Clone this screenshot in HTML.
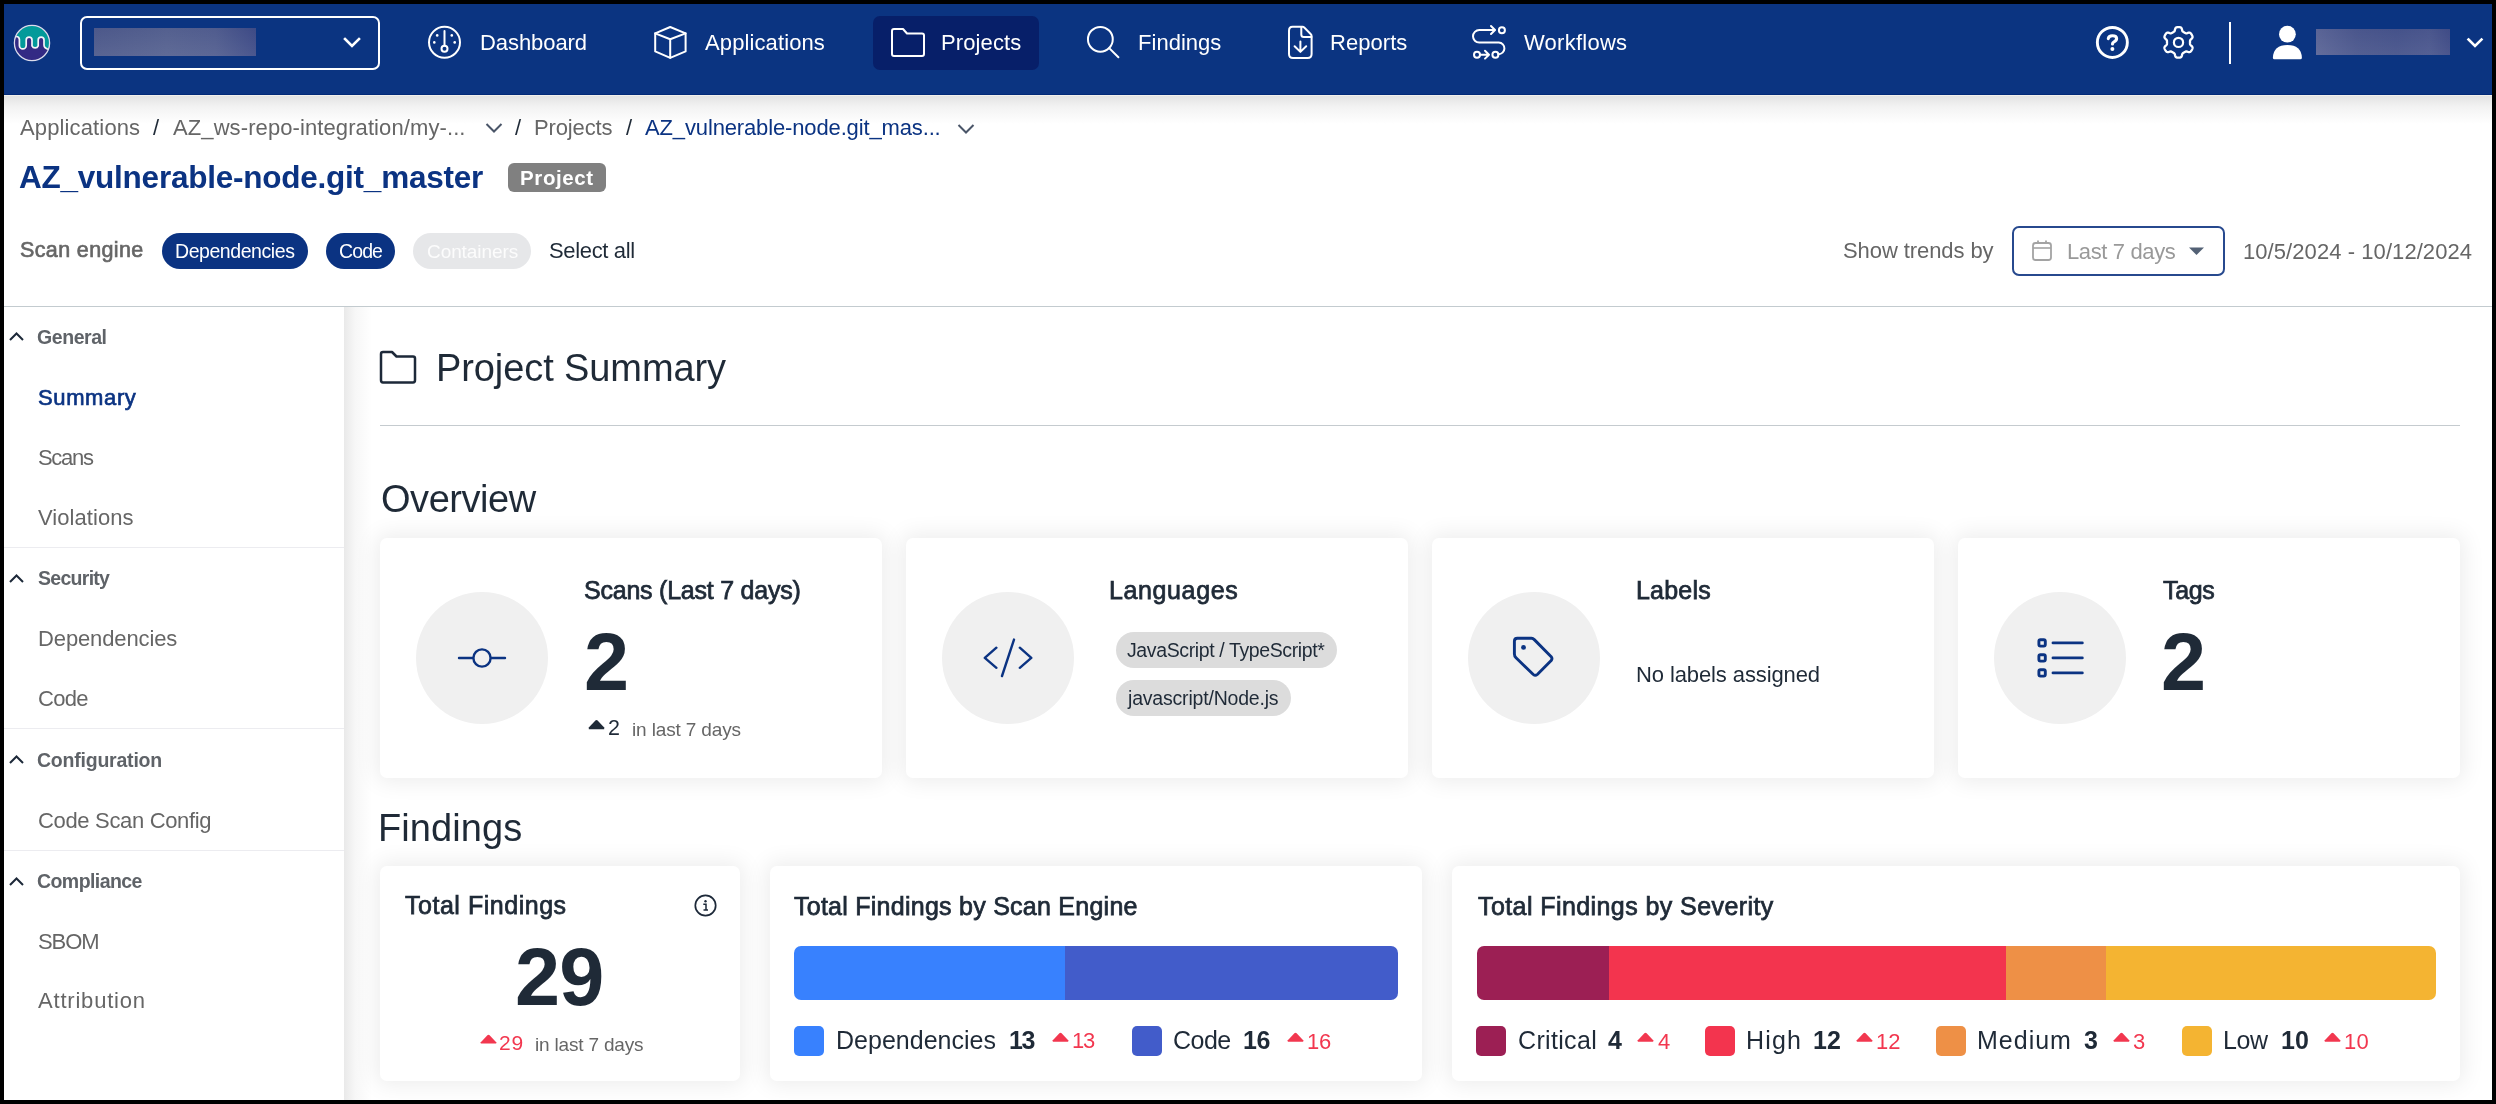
<!DOCTYPE html>
<html><head><meta charset='utf-8'><style>
html,body{margin:0;padding:0;width:2496px;height:1104px;overflow:hidden;background:#000}
body{position:relative;font-family:"Liberation Sans",sans-serif}
.t{position:absolute;white-space:pre;will-change:transform}
svg{overflow:visible}
</style></head><body>
<div style='position:absolute;left:0px;top:0px;width:2496px;height:1104px;background:#000'></div>
<div style='position:absolute;left:4px;top:4px;width:2488px;height:1096px;background:#fff'></div>
<div style='position:absolute;left:4px;top:4px;width:2488px;height:91px;background:#0b3481'></div>
<div style='position:absolute;left:4px;top:94px;width:2488px;height:1px;background:#022a78'></div>
<div style='position:absolute;left:4px;top:95px;width:2488px;height:1px;background:#f2f0ec'></div>
<div style='position:absolute;left:4px;top:96px;width:2488px;height:28px;background:linear-gradient(#e3e3e3,#f3f3f3 40%,#ffffff)'></div>
<svg style='position:absolute;left:13px;top:24px;' width='38' height='38' viewBox='0 0 38 38'>
<defs><clipPath id='lc'><circle cx='19' cy='19' r='17.3'/></clipPath></defs>
<circle cx='19' cy='19' r='17.5' fill='#332a84'/>
<g clip-path='url(#lc)'>
<path d='M0 0 H38 V26 L35.5 25.5 Q31 24 31 21 V16 A2.9 2.9 0 0 0 25.2 16 V21.8 A3.4 3.4 0 0 1 19 21.8 V16 A2.9 2.9 0 0 0 13.2 16 V21.4 A3.4 3.4 0 0 1 6.4 21.4 V15.5 Q6.4 12.5 3.1 12.5 H0 Z' fill='#029a9a'/>
<path d='M0 12.5 H3.1 Q6.4 12.5 6.4 15.5 V21.4 A3.4 3.4 0 0 0 13.2 21.4 V16 A2.9 2.9 0 0 1 19 16 V21.8 A3.4 3.4 0 0 0 25.2 21.8 V16 A2.9 2.9 0 0 1 31 16 V21 Q31 24 35.5 25.5 L38 26' fill='none' stroke='#f4f4f8' stroke-width='1.7'/>
</g>
<circle cx='19' cy='19' r='17.6' fill='none' stroke='#dcdcec' stroke-width='1.3'/>
</svg>
<div style='position:absolute;left:80px;top:16px;width:300px;height:54px;border:2px solid #fff;border-radius:7px;box-sizing:border-box'></div>
<div style='position:absolute;left:94px;top:28px;width:162px;height:28px;background:linear-gradient(rgba(255,255,255,0),rgba(255,255,255,0.07)),linear-gradient(90deg,#4c588a,#54608f 45%,#505c8e 75%,#3d4a86)'></div>
<svg style='position:absolute;left:343px;top:36px;' width='18' height='14' viewBox='0 0 18 14'><path d='M2 3 L9 10 L16 3' fill='none' stroke='#fff' stroke-width='2.6' stroke-linecap='square'/></svg>
<div style='position:absolute;left:873px;top:16px;width:166px;height:54px;background:#071f69;border-radius:7px'></div>
<svg style='position:absolute;left:427px;top:25px;' width='36' height='36' viewBox='0 0 36 36'><circle cx='17.5' cy='17.35' r='15.5' fill='none' stroke='#fff' stroke-width='2' stroke-linecap='round' stroke-linejoin='round'/>
<line x1='17.5' y1='6' x2='17.5' y2='20.6' fill='none' stroke='#fff' stroke-width='2' stroke-linecap='round' stroke-linejoin='round'/><circle cx='17.5' cy='23.7' r='3' fill='none' stroke='#fff' stroke-width='2' stroke-linecap='round' stroke-linejoin='round'/>
<circle cx='10.2' cy='10.4' r='1.3' fill='#fff'/><circle cx='24.8' cy='10.4' r='1.3' fill='#fff'/>
<circle cx='7.3' cy='17.4' r='1.3' fill='#fff'/><circle cx='27.7' cy='17.4' r='1.3' fill='#fff'/></svg>
<svg style='position:absolute;left:652px;top:25px;' width='36' height='36' viewBox='0 0 36 36'><path d='M18.2 2 L33.6 8.4 V26.4 L18.2 32.8 L3.2 26.4 V8.4 Z' fill='none' stroke='#fff' stroke-width='2' stroke-linecap='round' stroke-linejoin='round'/>
<path d='M3.2 8.4 L18.2 14.3 L33.6 8.4 M18.2 14.3 V32.8' fill='none' stroke='#fff' stroke-width='2' stroke-linecap='round' stroke-linejoin='round'/></svg>
<svg style='position:absolute;left:890px;top:27px;' width='36' height='31' viewBox='0 0 36 31'><path d='M2 4 Q2 2 4 2 H13 L17 6.5 H32 Q34 6.5 34 8.5 V27 Q34 29 32 29 H4 Q2 29 2 27 Z' fill='none' stroke='#fff' stroke-width='2' stroke-linecap='round' stroke-linejoin='round'/></svg>
<svg style='position:absolute;left:1085px;top:24px;' width='37' height='37' viewBox='0 0 37 37'><circle cx='15.35' cy='15.3' r='12.4' fill='none' stroke='#fff' stroke-width='2' stroke-linecap='round' stroke-linejoin='round'/><line x1='24.2' y1='24.1' x2='33.4' y2='33.3' fill='none' stroke='#fff' stroke-width='2' stroke-linecap='round' stroke-linejoin='round'/></svg>
<svg style='position:absolute;left:1286px;top:25px;' width='29' height='36' viewBox='0 0 29 36'><path d='M6.5 1.8 H16.5 Q17.5 1.8 18.5 2.8 L24.6 9 Q25.6 10 25.6 11 V28.9 Q25.6 32.9 21.6 32.9 H7 Q3 32.9 3 28.9 V5.8 Q3 1.8 6.5 1.8 Z' fill='none' stroke='#fff' stroke-width='2' stroke-linecap='round' stroke-linejoin='round'/>
<path d='M15.3 2 V9.4 Q15.3 11.9 17.8 11.9 H25.4' fill='none' stroke='#fff' stroke-width='2' stroke-linecap='round' stroke-linejoin='round'/><path d='M14.4 16.5 V26.6 M8.6 21.2 L14.4 26.9 L20.2 21.2' fill='none' stroke='#fff' stroke-width='2' stroke-linecap='round' stroke-linejoin='round'/></svg>
<svg style='position:absolute;left:1471px;top:24px;' width='37' height='37' viewBox='0 0 37 37'><path d='M23.5 6 H8.3 A6.3 6.3 0 0 0 8.3 18.6 H27.8 A5.8 5.8 0 0 1 27.4 30.2' fill='none' stroke='#fff' stroke-width='2' stroke-linecap='round' stroke-linejoin='round'/>
<path d='M20 2 L24 6 L20 10' fill='none' stroke='#fff' stroke-width='2' stroke-linecap='round' stroke-linejoin='round'/><circle cx='30.9' cy='6.2' r='3' fill='none' stroke='#fff' stroke-width='2' stroke-linecap='round' stroke-linejoin='round'/>
<circle cx='6' cy='30.7' r='3' fill='none' stroke='#fff' stroke-width='2' stroke-linecap='round' stroke-linejoin='round'/><path d='M9 30.7 H17.5 M14 26.8 L18 30.7 L14 34.6' fill='none' stroke='#fff' stroke-width='2' stroke-linecap='round' stroke-linejoin='round'/><circle cx='24.4' cy='30.7' r='3' fill='none' stroke='#fff' stroke-width='2' stroke-linecap='round' stroke-linejoin='round'/></svg>
<svg style='position:absolute;left:2094px;top:24px;' width='37' height='37' viewBox='0 0 37 37'><circle cx='18.35' cy='18.45' r='15' fill='none' stroke='#fff' stroke-width='2.9'/>
<path d='M14.3 14.6 Q14.8 11.7 18.3 11.7 Q22.6 11.7 22.6 14.6 Q22.6 16.6 20 17.8 Q18.5 18.5 18.5 20' fill='none' stroke='#fff' stroke-width='3.1' stroke-linecap='round' stroke-linejoin='round'/>
<circle cx='18.4' cy='24.9' r='2' fill='#fff'/></svg>
<svg style='position:absolute;left:2161px;top:25px;' width='35' height='35' viewBox='0 0 35 35'><path d='M29.00 17.40 L29.00 17.70 L29.00 18.00 L28.99 18.30 L29.00 18.61 L29.02 18.92 L29.08 19.23 L29.22 19.57 L29.48 19.95 L29.90 20.38 L30.44 20.87 L30.97 21.39 L31.34 21.90 L31.53 22.37 L31.57 22.80 L31.53 23.21 L31.42 23.60 L31.28 23.97 L31.12 24.34 L30.94 24.70 L30.75 25.05 L30.54 25.39 L30.32 25.73 L30.09 26.05 L29.83 26.36 L29.54 26.64 L29.22 26.89 L28.82 27.07 L28.31 27.14 L27.69 27.07 L26.98 26.88 L26.28 26.65 L25.70 26.50 L25.24 26.46 L24.88 26.51 L24.57 26.62 L24.30 26.75 L24.03 26.90 L23.77 27.05 L23.51 27.21 L23.25 27.36 L22.99 27.51 L22.73 27.66 L22.46 27.81 L22.20 27.96 L21.95 28.13 L21.70 28.35 L21.48 28.63 L21.28 29.05 L21.12 29.63 L20.97 30.34 L20.78 31.06 L20.53 31.63 L20.21 32.03 L19.86 32.29 L19.48 32.45 L19.09 32.56 L18.70 32.62 L18.30 32.67 L17.90 32.69 L17.50 32.70 L17.10 32.69 L16.70 32.67 L16.30 32.62 L15.91 32.56 L15.52 32.45 L15.14 32.29 L14.79 32.03 L14.47 31.63 L14.22 31.06 L14.03 30.34 L13.88 29.63 L13.72 29.05 L13.52 28.63 L13.30 28.35 L13.05 28.13 L12.80 27.96 L12.54 27.81 L12.27 27.66 L12.01 27.51 L11.75 27.36 L11.49 27.21 L11.23 27.05 L10.97 26.90 L10.70 26.75 L10.43 26.62 L10.12 26.51 L9.76 26.46 L9.30 26.50 L8.72 26.65 L8.02 26.88 L7.31 27.07 L6.69 27.14 L6.18 27.07 L5.78 26.89 L5.46 26.64 L5.17 26.36 L4.91 26.05 L4.68 25.73 L4.46 25.39 L4.25 25.05 L4.06 24.70 L3.88 24.34 L3.72 23.97 L3.58 23.60 L3.47 23.21 L3.43 22.80 L3.47 22.37 L3.66 21.90 L4.03 21.39 L4.56 20.87 L5.10 20.38 L5.52 19.95 L5.78 19.57 L5.92 19.23 L5.98 18.92 L6.00 18.61 L6.01 18.30 L6.00 18.00 L6.00 17.70 L6.00 17.40 L6.00 17.10 L6.00 16.80 L6.01 16.50 L6.00 16.19 L5.98 15.88 L5.92 15.57 L5.78 15.23 L5.52 14.85 L5.10 14.42 L4.56 13.93 L4.03 13.41 L3.66 12.90 L3.47 12.43 L3.43 12.00 L3.47 11.59 L3.58 11.20 L3.72 10.83 L3.88 10.46 L4.06 10.10 L4.25 9.75 L4.46 9.41 L4.68 9.07 L4.91 8.75 L5.17 8.44 L5.46 8.16 L5.78 7.91 L6.18 7.73 L6.69 7.66 L7.31 7.73 L8.02 7.92 L8.72 8.15 L9.30 8.30 L9.76 8.34 L10.12 8.29 L10.43 8.18 L10.70 8.05 L10.97 7.90 L11.23 7.75 L11.49 7.59 L11.75 7.44 L12.01 7.29 L12.27 7.14 L12.54 6.99 L12.80 6.84 L13.05 6.67 L13.30 6.45 L13.52 6.17 L13.72 5.75 L13.88 5.17 L14.03 4.46 L14.22 3.74 L14.47 3.17 L14.79 2.77 L15.14 2.51 L15.52 2.35 L15.91 2.24 L16.30 2.18 L16.70 2.13 L17.10 2.11 L17.50 2.10 L17.90 2.11 L18.30 2.13 L18.70 2.18 L19.09 2.24 L19.48 2.35 L19.86 2.51 L20.21 2.77 L20.53 3.17 L20.78 3.74 L20.97 4.46 L21.12 5.17 L21.28 5.75 L21.48 6.17 L21.70 6.45 L21.95 6.67 L22.20 6.84 L22.46 6.99 L22.73 7.14 L22.99 7.29 L23.25 7.44 L23.51 7.59 L23.77 7.75 L24.03 7.90 L24.30 8.05 L24.57 8.18 L24.88 8.29 L25.24 8.34 L25.70 8.30 L26.28 8.15 L26.98 7.92 L27.69 7.73 L28.31 7.66 L28.82 7.73 L29.22 7.91 L29.54 8.16 L29.83 8.44 L30.09 8.75 L30.32 9.07 L30.54 9.41 L30.75 9.75 L30.94 10.10 L31.12 10.46 L31.28 10.83 L31.42 11.20 L31.53 11.59 L31.57 12.00 L31.53 12.43 L31.34 12.90 L30.97 13.41 L30.44 13.93 L29.90 14.42 L29.48 14.85 L29.22 15.23 L29.08 15.57 L29.02 15.88 L29.00 16.19 L28.99 16.50 L29.00 16.80 L29.00 17.10 Z' fill='none' stroke='#fff' stroke-width='2.3' stroke-linejoin='round'/><circle cx='17.5' cy='17.4' r='4.6' fill='none' stroke='#fff' stroke-width='2.2'/></svg>
<div style='position:absolute;left:2229px;top:22px;width:2px;height:42px;background:#fff'></div>
<svg style='position:absolute;left:2271px;top:25px;' width='33' height='35' viewBox='0 0 33 35'><circle cx='16.4' cy='9.2' r='8.4' fill='#fff'/><path d='M3.4 34.2 Q1.9 34.2 1.9 32.7 Q2.5 20.1 16.4 20.1 Q30.3 20.1 30.9 32.7 Q30.9 34.2 29.4 34.2 Z' fill='#fff'/></svg>
<div style='position:absolute;left:2316px;top:29px;width:134px;height:26px;background:linear-gradient(rgba(255,255,255,0),rgba(255,255,255,0.06)),linear-gradient(90deg,#5a6496,#4a568c 30%,#45528a 60%,#4a568d 85%,#3f4b86)'></div>
<svg style='position:absolute;left:2466px;top:36px;' width='18' height='14' viewBox='0 0 18 14'><path d='M2.5 3.5 L9 10 L15.5 3.5' fill='none' stroke='#fff' stroke-width='2.6' stroke-linecap='square'/></svg>
<svg style='position:absolute;left:484px;top:121px;' width='20' height='13' viewBox='0 0 20 13'><path d='M2.5 3 L10 10.5 L17.5 3' fill='none' stroke='#4a5568' stroke-width='2'/></svg>
<svg style='position:absolute;left:956px;top:122px;' width='20' height='13' viewBox='0 0 20 13'><path d='M2.5 3 L10 10.5 L17.5 3' fill='none' stroke='#4a5568' stroke-width='2'/></svg>
<div style='position:absolute;left:508px;top:163px;width:98px;height:29px;background:#808080;border-radius:6px'></div>
<div style='position:absolute;left:162px;top:233px;width:146px;height:36px;background:#0b3382;border-radius:18px'></div>
<div style='position:absolute;left:326px;top:233px;width:69px;height:36px;background:#0b3382;border-radius:18px'></div>
<div style='position:absolute;left:413px;top:233px;width:118px;height:36px;background:#e6e7e9;border-radius:18px'></div>
<div style='position:absolute;left:2012px;top:226px;width:213px;height:50px;border:2px solid #27498e;border-radius:7px;box-sizing:border-box'></div>
<svg style='position:absolute;left:2031px;top:239px;' width='22' height='23' viewBox='0 0 22 23'><rect x='2' y='4' width='18' height='17' rx='2.5' fill='none' stroke='#a3a3a3' stroke-width='1.8'/><line x1='2' y1='9' x2='20' y2='9' stroke='#a3a3a3' stroke-width='1.6'/><line x1='7' y1='1.5' x2='7' y2='5' stroke='#a3a3a3' stroke-width='1.8'/><line x1='15' y1='1.5' x2='15' y2='5' stroke='#a3a3a3' stroke-width='1.8'/></svg>
<svg style='position:absolute;left:2188px;top:246px;' width='17' height='10' viewBox='0 0 17 10'><path d='M1 1.5 H16 L8.5 9 Z' fill='#536175'/></svg>
<div style='position:absolute;left:4px;top:306px;width:2488px;height:1px;background:#c3cbcf'></div>
<div style='position:absolute;left:344px;top:307px;width:28px;height:793px;background:linear-gradient(90deg,#e9e9e9,#f7f7f7 40%,#ffffff)'></div>
<svg style='position:absolute;left:8px;top:330px;' width='17' height='12' viewBox='0 0 17 12'><path d='M2 10 L8.5 3.5 L15 10' fill='none' stroke='#1d2939' stroke-width='2'/></svg>
<svg style='position:absolute;left:8px;top:572px;' width='17' height='12' viewBox='0 0 17 12'><path d='M2 10 L8.5 3.5 L15 10' fill='none' stroke='#1d2939' stroke-width='2'/></svg>
<svg style='position:absolute;left:8px;top:753px;' width='17' height='12' viewBox='0 0 17 12'><path d='M2 10 L8.5 3.5 L15 10' fill='none' stroke='#1d2939' stroke-width='2'/></svg>
<svg style='position:absolute;left:8px;top:875px;' width='17' height='12' viewBox='0 0 17 12'><path d='M2 10 L8.5 3.5 L15 10' fill='none' stroke='#1d2939' stroke-width='2'/></svg>
<div style='position:absolute;left:4px;top:547px;width:340px;height:1px;background:#ececf0'></div>
<div style='position:absolute;left:4px;top:728px;width:340px;height:1px;background:#ececf0'></div>
<div style='position:absolute;left:4px;top:850px;width:340px;height:1px;background:#ececf0'></div>
<svg style='position:absolute;left:378px;top:349px;' width='40' height='36' viewBox='0 0 40 36'><path d='M3 5 Q3 3 5 3 H14 L18.5 7.5 H35 Q37 7.5 37 9.5 V31 Q37 33.5 35 33.5 H5 Q3 33.5 3 31 Z' fill='none' stroke='#1d2939' stroke-width='2.5' stroke-linejoin='round'/></svg>
<div style='position:absolute;left:380px;top:425px;width:2080px;height:1px;background:#c5cbcf'></div>
<div style='position:absolute;left:380px;top:538px;width:502px;height:240px;background:#fff;border-radius:7px;box-shadow:0 0 22px 4px rgba(0,0,0,0.075)'></div>
<div style='position:absolute;left:416px;top:592px;width:132px;height:132px;border-radius:50%;background:#f0f0f0'></div>
<div style='position:absolute;left:906px;top:538px;width:502px;height:240px;background:#fff;border-radius:7px;box-shadow:0 0 22px 4px rgba(0,0,0,0.075)'></div>
<div style='position:absolute;left:942px;top:592px;width:132px;height:132px;border-radius:50%;background:#f0f0f0'></div>
<div style='position:absolute;left:1432px;top:538px;width:502px;height:240px;background:#fff;border-radius:7px;box-shadow:0 0 22px 4px rgba(0,0,0,0.075)'></div>
<div style='position:absolute;left:1468px;top:592px;width:132px;height:132px;border-radius:50%;background:#f0f0f0'></div>
<div style='position:absolute;left:1958px;top:538px;width:502px;height:240px;background:#fff;border-radius:7px;box-shadow:0 0 22px 4px rgba(0,0,0,0.075)'></div>
<div style='position:absolute;left:1994px;top:592px;width:132px;height:132px;border-radius:50%;background:#f0f0f0'></div>
<svg style='position:absolute;left:456px;top:646px;' width='52' height='24' viewBox='0 0 52 24'><line x1='3' y1='12' x2='17' y2='12' fill='none' stroke='#0b3382' stroke-width='2.4' stroke-linecap='round' stroke-linejoin='round'/><circle cx='26' cy='12' r='8.6' fill='none' stroke='#0b3382' stroke-width='2.4' stroke-linecap='round' stroke-linejoin='round'/><line x1='35' y1='12' x2='49' y2='12' fill='none' stroke='#0b3382' stroke-width='2.4' stroke-linecap='round' stroke-linejoin='round'/></svg>
<svg style='position:absolute;left:982px;top:637px;' width='52' height='42' viewBox='0 0 52 42'><path d='M14.4 10.7 L2.8 20.9 L14.4 30.8 M37.8 10.7 L49.3 20.9 L37.8 30.8 M32 2.6 L20 39' fill='none' stroke='#0b3382' stroke-width='2.4' stroke-linecap='round' stroke-linejoin='round'/></svg>
<svg style='position:absolute;left:1511px;top:635px;' width='44' height='44' viewBox='0 0 44 44'><path d='M3.4 6.3 Q3.4 3.3 6.4 3.3 H20.5 Q22 3.3 23.3 4.6 L40.2 21.7 Q41.7 23.6 40.2 25.5 L26.3 39.5 Q24.3 41.2 22.3 39.5 L5 22.8 Q3.4 21.2 3.4 19 Z' fill='none' stroke='#0b3382' stroke-width='2.9' stroke-linecap='round' stroke-linejoin='round'/><circle cx='12.5' cy='12.4' r='2.4' fill='#0b3382'/></svg>
<svg style='position:absolute;left:2035px;top:636px;' width='52' height='44' viewBox='0 0 52 44'><rect x='3.9' y='3.7' width='6.4' height='6.4' rx='1.6' fill='none' stroke='#0b3382' stroke-width='2.9' stroke-linecap='round' stroke-linejoin='round'/><rect x='3.9' y='18.7' width='6.4' height='6.4' rx='1.6' fill='none' stroke='#0b3382' stroke-width='2.9' stroke-linecap='round' stroke-linejoin='round'/><rect x='3.9' y='33.7' width='6.4' height='6.4' rx='1.6' fill='none' stroke='#0b3382' stroke-width='2.9' stroke-linecap='round' stroke-linejoin='round'/><line x1='18' y1='6.9' x2='47.3' y2='6.9' fill='none' stroke='#0b3382' stroke-width='2.9' stroke-linecap='round' stroke-linejoin='round'/><line x1='18' y1='21.9' x2='47.3' y2='21.9' fill='none' stroke='#0b3382' stroke-width='2.9' stroke-linecap='round' stroke-linejoin='round'/><line x1='18' y1='36.9' x2='47.3' y2='36.9' fill='none' stroke='#0b3382' stroke-width='2.9' stroke-linecap='round' stroke-linejoin='round'/></svg>
<svg style='position:absolute;left:587.5px;top:718.5px;' width='17' height='11' viewBox='0 0 17 11'><path d='M0.8 10.2 V8.6 L7.4 1.6 Q8.5 0.5 9.6 1.6 L16.2 8.6 V10.2 Z' fill='#1f2a37'/></svg>
<div style='position:absolute;left:1116px;top:632px;width:221px;height:36px;background:#dcdcdc;border-radius:18px'></div>
<div style='position:absolute;left:1116px;top:680px;width:175px;height:36px;background:#dcdcdc;border-radius:18px'></div>
<div style='position:absolute;left:380px;top:866px;width:360px;height:215px;background:#fff;border-radius:7px;box-shadow:0 0 22px 4px rgba(0,0,0,0.075)'></div>
<div style='position:absolute;left:770px;top:866px;width:652px;height:215px;background:#fff;border-radius:7px;box-shadow:0 0 22px 4px rgba(0,0,0,0.075)'></div>
<div style='position:absolute;left:1452px;top:866px;width:1008px;height:215px;background:#fff;border-radius:7px;box-shadow:0 0 22px 4px rgba(0,0,0,0.075)'></div>
<svg style='position:absolute;left:693px;top:893px;' width='25' height='25' viewBox='0 0 25 25'><circle cx='12.5' cy='12.5' r='10.2' fill='none' stroke='#1d2939' stroke-width='1.7'/><circle cx='12.5' cy='8.2' r='1.2' fill='#1d2939'/><path d='M10.3 11.3 H13 V17 M10.5 17 H15' fill='none' stroke='#1d2939' stroke-width='1.5'/></svg>
<svg style='position:absolute;left:479.5px;top:1033.5px;' width='17' height='11' viewBox='0 0 17 11'><path d='M0.8 9.6 V8.2 L7.4 1.2 Q8.5 0.1 9.6 1.2 L16.2 8.2 V9.6 Z' fill='#f2374f'/></svg>
<div style='position:absolute;left:794px;top:946px;width:604px;height:54px;border-radius:7px;overflow:hidden;background:linear-gradient(90deg,#3881fe 0,#3881fe 270.8px,#425cca 270.8px)'></div>
<div style='position:absolute;left:794px;top:1026px;width:30px;height:30px;background:#3881fe;border-radius:5px'></div>
<svg style='position:absolute;left:1051.5px;top:1032px;' width='17' height='11' viewBox='0 0 17 11'><path d='M0.8 9.8 V8.2 L7.4 1.2 Q8.5 0.1 9.6 1.2 L16.2 8.2 V9.8 Z' fill='#f2374f'/></svg>
<div style='position:absolute;left:1132px;top:1026px;width:30px;height:30px;background:#425cca;border-radius:5px'></div>
<svg style='position:absolute;left:1286.7px;top:1032px;' width='17' height='11' viewBox='0 0 17 11'><path d='M0.8 9.8 V8.2 L7.4 1.2 Q8.5 0.1 9.6 1.2 L16.2 8.2 V9.8 Z' fill='#f2374f'/></svg>
<div style='position:absolute;left:1477px;top:946px;width:959.4px;height:54px;border-radius:7px;overflow:hidden;background:linear-gradient(90deg,#9c1f54 0,#9c1f54 132.3px,#f3344e 132.3px,#f3344e 529.3px,#ee9046 529.3px,#ee9046 628.6px,#f4b432 628.6px)'></div>
<div style='position:absolute;left:1476px;top:1026px;width:30px;height:30px;background:#9c1f54;border-radius:5px'></div>
<svg style='position:absolute;left:1637px;top:1032px;' width='17' height='11' viewBox='0 0 17 11'><path d='M0.8 9.8 V8.2 L7.4 1.2 Q8.5 0.1 9.6 1.2 L16.2 8.2 V9.8 Z' fill='#f2374f'/></svg>
<div style='position:absolute;left:1705px;top:1026px;width:30px;height:30px;background:#f3344e;border-radius:5px'></div>
<svg style='position:absolute;left:1856px;top:1032px;' width='17' height='11' viewBox='0 0 17 11'><path d='M0.8 9.8 V8.2 L7.4 1.2 Q8.5 0.1 9.6 1.2 L16.2 8.2 V9.8 Z' fill='#f2374f'/></svg>
<div style='position:absolute;left:1936px;top:1026px;width:30px;height:30px;background:#ee9046;border-radius:5px'></div>
<svg style='position:absolute;left:2113px;top:1032px;' width='17' height='11' viewBox='0 0 17 11'><path d='M0.8 9.8 V8.2 L7.4 1.2 Q8.5 0.1 9.6 1.2 L16.2 8.2 V9.8 Z' fill='#f2374f'/></svg>
<div style='position:absolute;left:2182px;top:1026px;width:30px;height:30px;background:#f4b432;border-radius:5px'></div>
<svg style='position:absolute;left:2324px;top:1032px;' width='17' height='11' viewBox='0 0 17 11'><path d='M0.8 9.8 V8.2 L7.4 1.2 Q8.5 0.1 9.6 1.2 L16.2 8.2 V9.8 Z' fill='#f2374f'/></svg>
<div class='t' style='left:479.70px;top:32.00px;font-size:22px;line-height:22px;font-weight:400;color:#ffffff;letter-spacing:-0.075px'>Dashboard</div>
<div class='t' style='left:705.30px;top:32.00px;font-size:22px;line-height:22px;font-weight:400;color:#ffffff;letter-spacing:0.109px'>Applications</div>
<div class='t' style='left:941.00px;top:32.00px;font-size:22px;line-height:22px;font-weight:400;color:#ffffff;letter-spacing:0.114px'>Projects</div>
<div class='t' style='left:1137.50px;top:32.00px;font-size:22px;line-height:22px;font-weight:400;color:#ffffff;letter-spacing:0.029px'>Findings</div>
<div class='t' style='left:1329.60px;top:32.00px;font-size:22px;line-height:22px;font-weight:400;color:#ffffff;letter-spacing:0.050px'>Reports</div>
<div class='t' style='left:1524.00px;top:32.00px;font-size:22px;line-height:22px;font-weight:400;color:#ffffff;letter-spacing:0.250px'>Workflows</div>
<div class='t' style='left:20.30px;top:117.00px;font-size:22px;line-height:22px;font-weight:400;color:#666666;letter-spacing:0.136px'>Applications</div>
<div class='t' style='left:153.00px;top:117.00px;font-size:22px;line-height:22px;font-weight:400;color:#1f2a37;letter-spacing:0.000px'>/</div>
<div class='t' style='left:172.70px;top:117.00px;font-size:22px;line-height:22px;font-weight:400;color:#666666;letter-spacing:0.096px'>AZ_ws-repo-integration/my-...</div>
<div class='t' style='left:515.30px;top:117.00px;font-size:22px;line-height:22px;font-weight:400;color:#1f2a37;letter-spacing:0.000px'>/</div>
<div class='t' style='left:534.00px;top:117.00px;font-size:22px;line-height:22px;font-weight:400;color:#666666;letter-spacing:-0.143px'>Projects</div>
<div class='t' style='left:626.00px;top:117.00px;font-size:22px;line-height:22px;font-weight:400;color:#1f2a37;letter-spacing:0.000px'>/</div>
<div class='t' style='left:644.60px;top:117.00px;font-size:22px;line-height:22px;font-weight:400;color:#0b3382;letter-spacing:-0.139px'>AZ_vulnerable-node.git_mas...</div>
<div class='t' style='left:19.20px;top:162.00px;font-size:31.5px;line-height:31.5px;font-weight:700;color:#0b3382;letter-spacing:-0.236px'>AZ_vulnerable-node.git_master</div>
<div class='t' style='left:520.00px;top:167.50px;font-size:20.5px;line-height:20.5px;font-weight:700;color:#ffffff;letter-spacing:0.617px'>Project</div>
<div class='t' style='left:20.12px;top:240.48px;font-size:21.5px;line-height:21.5px;font-weight:400;color:#666666;letter-spacing:0.365px;-webkit-text-stroke:0.65px #666666'>Scan engine</div>
<div class='t' style='left:175.00px;top:242.10px;font-size:19.5px;line-height:19.5px;font-weight:400;color:#ffffff;letter-spacing:-0.436px'>Dependencies</div>
<div class='t' style='left:338.60px;top:242.10px;font-size:19.5px;line-height:19.5px;font-weight:400;color:#ffffff;letter-spacing:-0.900px'>Code</div>
<div class='t' style='left:426.50px;top:242.10px;font-size:19px;line-height:19px;font-weight:400;color:#fcfcfc;letter-spacing:-0.078px'>Containers</div>
<div class='t' style='left:549.30px;top:239.80px;font-size:22px;line-height:22px;font-weight:400;color:#1f2a37;letter-spacing:-0.344px'>Select all</div>
<div class='t' style='left:1842.80px;top:239.80px;font-size:22px;line-height:22px;font-weight:400;color:#666666;letter-spacing:-0.085px'>Show trends by</div>
<div class='t' style='left:2066.70px;top:241.00px;font-size:22px;line-height:22px;font-weight:400;color:#999999;letter-spacing:-0.370px'>Last 7 days</div>
<div class='t' style='left:2243.00px;top:240.50px;font-size:22px;line-height:22px;font-weight:400;color:#666666;letter-spacing:0.071px'>10/5/2024 - 10/12/2024</div>
<div class='t' style='left:36.60px;top:328.00px;font-size:19.5px;line-height:19.5px;font-weight:700;color:#5f6368;letter-spacing:-0.433px'>General</div>
<div class='t' style='left:37.60px;top:569.40px;font-size:19.5px;line-height:19.5px;font-weight:700;color:#5f6368;letter-spacing:-0.714px'>Security</div>
<div class='t' style='left:36.60px;top:750.70px;font-size:19.5px;line-height:19.5px;font-weight:700;color:#5f6368;letter-spacing:-0.217px'>Configuration</div>
<div class='t' style='left:36.60px;top:872.30px;font-size:19.5px;line-height:19.5px;font-weight:700;color:#5f6368;letter-spacing:-0.567px'>Compliance</div>
<div class='t' style='left:37.83px;top:386.77px;font-size:22px;line-height:22px;font-weight:400;color:#0b3382;letter-spacing:0.623px;-webkit-text-stroke:0.66px #0b3382'>Summary</div>
<div class='t' style='left:37.60px;top:446.90px;font-size:22px;line-height:22px;font-weight:400;color:#666666;letter-spacing:-1.300px'>Scans</div>
<div class='t' style='left:38.10px;top:506.90px;font-size:22px;line-height:22px;font-weight:400;color:#666666;letter-spacing:0.067px'>Violations</div>
<div class='t' style='left:38.30px;top:628.20px;font-size:22px;line-height:22px;font-weight:400;color:#666666;letter-spacing:-0.118px'>Dependencies</div>
<div class='t' style='left:38.00px;top:687.80px;font-size:22px;line-height:22px;font-weight:400;color:#666666;letter-spacing:-0.667px'>Code</div>
<div class='t' style='left:38.00px;top:809.60px;font-size:22px;line-height:22px;font-weight:400;color:#666666;letter-spacing:-0.333px'>Code Scan Config</div>
<div class='t' style='left:37.80px;top:930.60px;font-size:22px;line-height:22px;font-weight:400;color:#666666;letter-spacing:-1.100px'>SBOM</div>
<div class='t' style='left:38.30px;top:990.40px;font-size:22px;line-height:22px;font-weight:400;color:#666666;letter-spacing:0.800px'>Attribution</div>
<div class='t' style='left:435.70px;top:349.00px;font-size:38px;line-height:38px;font-weight:400;color:#1f2a37;letter-spacing:-0.093px'>Project Summary</div>
<div class='t' style='left:380.50px;top:480.30px;font-size:38px;line-height:38px;font-weight:400;color:#1f2a37;letter-spacing:-0.457px'>Overview</div>
<div class='t' style='left:584.38px;top:577.52px;font-size:25px;line-height:25px;font-weight:400;color:#1f2a37;letter-spacing:-0.231px;-webkit-text-stroke:0.75px #1f2a37'>Scans (Last 7 days)</div>
<div class='t' style='left:583.80px;top:621.90px;font-size:81px;line-height:81px;font-weight:700;color:#1f2a37;letter-spacing:0.000px'>2</div>
<div class='t' style='left:607.80px;top:717.70px;font-size:21.5px;line-height:21.5px;font-weight:400;color:#1f2a37;letter-spacing:0.000px'>2</div>
<div class='t' style='left:631.50px;top:719.50px;font-size:19px;line-height:19px;font-weight:400;color:#666666;letter-spacing:-0.146px'>in last 7 days</div>
<div class='t' style='left:1109.17px;top:577.52px;font-size:25px;line-height:25px;font-weight:400;color:#1f2a37;letter-spacing:0.619px;-webkit-text-stroke:0.75px #1f2a37'>Languages</div>
<div class='t' style='left:1126.60px;top:641.10px;font-size:19.5px;line-height:19.5px;font-weight:400;color:#1f2a37;letter-spacing:-0.383px'>JavaScript / TypeScript*</div>
<div class='t' style='left:1128.00px;top:689.00px;font-size:19.5px;line-height:19.5px;font-weight:400;color:#1f2a37;letter-spacing:-0.194px'>javascript/Node.js</div>
<div class='t' style='left:1636.08px;top:577.52px;font-size:25px;line-height:25px;font-weight:400;color:#1f2a37;letter-spacing:0.210px;-webkit-text-stroke:0.75px #1f2a37'>Labels</div>
<div class='t' style='left:1636.40px;top:663.90px;font-size:22px;line-height:22px;font-weight:400;color:#1f2a37;letter-spacing:-0.106px'>No labels assigned</div>
<div class='t' style='left:2162.68px;top:577.52px;font-size:25px;line-height:25px;font-weight:400;color:#1f2a37;letter-spacing:-0.350px;-webkit-text-stroke:0.75px #1f2a37'>Tags</div>
<div class='t' style='left:2160.60px;top:621.90px;font-size:81px;line-height:81px;font-weight:700;color:#1f2a37;letter-spacing:0.000px'>2</div>
<div class='t' style='left:378.40px;top:808.60px;font-size:38px;line-height:38px;font-weight:400;color:#1f2a37;letter-spacing:0.086px'>Findings</div>
<div class='t' style='left:404.88px;top:893.33px;font-size:25px;line-height:25px;font-weight:400;color:#1f2a37;letter-spacing:0.527px;-webkit-text-stroke:0.75px #1f2a37'>Total Findings</div>
<div class='t' style='left:515.40px;top:937.20px;font-size:81px;line-height:81px;font-weight:700;color:#1f2a37;letter-spacing:-0.700px'>29</div>
<div class='t' style='left:499.10px;top:1032.30px;font-size:21px;line-height:21px;font-weight:400;color:#f2374f;letter-spacing:0.900px'>29</div>
<div class='t' style='left:535.00px;top:1034.50px;font-size:19px;line-height:19px;font-weight:400;color:#666666;letter-spacing:-0.185px'>in last 7 days</div>
<div class='t' style='left:794.38px;top:893.62px;font-size:25px;line-height:25px;font-weight:400;color:#1f2a37;letter-spacing:0.255px;-webkit-text-stroke:0.75px #1f2a37'>Total Findings by Scan Engine</div>
<div class='t' style='left:835.70px;top:1028.00px;font-size:25px;line-height:25px;font-weight:400;color:#1f2a37;letter-spacing:0.018px'>Dependencies</div>
<div class='t' style='left:1008.50px;top:1028.00px;font-size:25px;line-height:25px;font-weight:700;color:#1f2a37;letter-spacing:-1.300px'>13</div>
<div class='t' style='left:1071.70px;top:1030.30px;font-size:22px;line-height:22px;font-weight:400;color:#f2374f;letter-spacing:-1.200px'>13</div>
<div class='t' style='left:1173.10px;top:1027.90px;font-size:25px;line-height:25px;font-weight:400;color:#1f2a37;letter-spacing:-0.533px'>Code</div>
<div class='t' style='left:1243.40px;top:1027.90px;font-size:25px;line-height:25px;font-weight:700;color:#1f2a37;letter-spacing:-0.400px'>16</div>
<div class='t' style='left:1306.60px;top:1030.60px;font-size:22px;line-height:22px;font-weight:400;color:#f2374f;letter-spacing:-0.300px'>16</div>
<div class='t' style='left:1477.58px;top:893.62px;font-size:25px;line-height:25px;font-weight:400;color:#1f2a37;letter-spacing:0.418px;-webkit-text-stroke:0.75px #1f2a37'>Total Findings by Severity</div>
<div class='t' style='left:1518.00px;top:1027.90px;font-size:25px;line-height:25px;font-weight:400;color:#1f2a37;letter-spacing:0.329px'>Critical</div>
<div class='t' style='left:1608.00px;top:1027.90px;font-size:25px;line-height:25px;font-weight:700;color:#1f2a37;letter-spacing:0.000px'>4</div>
<div class='t' style='left:1657.90px;top:1030.60px;font-size:22px;line-height:22px;font-weight:400;color:#f2374f;letter-spacing:0.000px'>4</div>
<div class='t' style='left:1746.00px;top:1027.90px;font-size:25px;line-height:25px;font-weight:400;color:#1f2a37;letter-spacing:1.200px'>High</div>
<div class='t' style='left:1812.60px;top:1027.90px;font-size:25px;line-height:25px;font-weight:700;color:#1f2a37;letter-spacing:0.200px'>12</div>
<div class='t' style='left:1876.00px;top:1030.60px;font-size:22px;line-height:22px;font-weight:400;color:#f2374f;letter-spacing:-0.100px'>12</div>
<div class='t' style='left:1977.40px;top:1027.90px;font-size:25px;line-height:25px;font-weight:400;color:#1f2a37;letter-spacing:1.000px'>Medium</div>
<div class='t' style='left:2084.40px;top:1027.90px;font-size:25px;line-height:25px;font-weight:700;color:#1f2a37;letter-spacing:0.000px'>3</div>
<div class='t' style='left:2132.90px;top:1030.60px;font-size:22px;line-height:22px;font-weight:400;color:#f2374f;letter-spacing:0.000px'>3</div>
<div class='t' style='left:2222.80px;top:1027.90px;font-size:25px;line-height:25px;font-weight:400;color:#1f2a37;letter-spacing:-0.400px'>Low</div>
<div class='t' style='left:2281.00px;top:1027.90px;font-size:25px;line-height:25px;font-weight:700;color:#1f2a37;letter-spacing:0.200px'>10</div>
<div class='t' style='left:2344.40px;top:1030.60px;font-size:22px;line-height:22px;font-weight:400;color:#f2374f;letter-spacing:0.300px'>10</div>

</body></html>
